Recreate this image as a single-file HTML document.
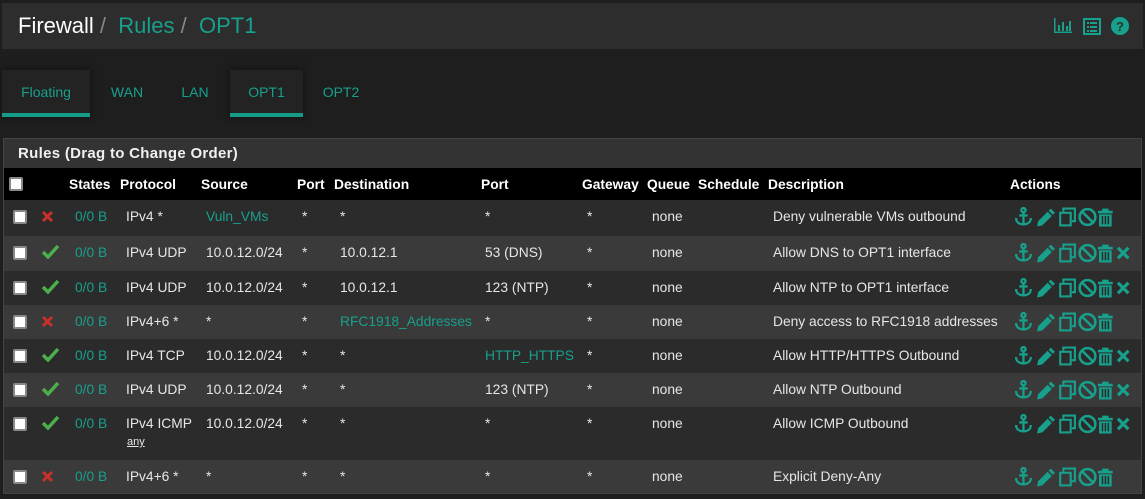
<!DOCTYPE html>
<html><head><meta charset="utf-8"><style>
*{margin:0;padding:0;box-sizing:border-box}
body{width:1145px;height:499px;background:#1e1e1e;font-family:"Liberation Sans",sans-serif;color:#e6e6e6;position:relative;overflow:hidden;font-size:13.8px}
.hdr{position:absolute;left:2px;top:3px;width:1141px;height:46px;background:#2d2d2d}
.hdr .t{position:absolute;left:16px;top:10px;font-size:22px;color:#fff}
.hdr .t span.s{color:#888}
.tl{color:#17a08c}
.tab{position:absolute;top:70px;height:47px;line-height:44px;font-size:14px;color:#17a08c;text-align:center}
.tab.a{background:#232323;box-shadow:0 0 6px #111;border-bottom:4px solid #149c89}
.panel{position:absolute;left:3px;top:138px;width:1139px;height:356px;border:1px solid #444;background:#2b2b2b}
.ph{position:absolute;left:0;top:0;width:100%;height:29px;background:#333;font-weight:bold;font-size:15px;padding:6px 14px;color:#f0f0f0;letter-spacing:.3px}
.th{position:absolute;left:0;top:29px;width:100%;height:32px;background:#000;font-weight:bold;color:#fff}
.row{position:absolute;left:0;width:100%}
.d{background:#2b2b2b}.l{background:#3a3a3a}
.c{position:absolute;white-space:nowrap}
.cb{position:absolute;width:14px;height:14px;background:#fff;border:2px solid #888;border-radius:2px}
.ic{position:absolute}
</style></head><body>
<div class="hdr"><div class="t">Firewall <span class="s">/</span>&nbsp; <span class="tl">Rules</span> <span class="s">/</span>&nbsp; <span class="tl">OPT1</span></div>
<svg style="position:absolute;left:1052px;top:15px" width="18" height="15" viewBox="0 0 18 15"><g fill="#17a08c"><rect x="0" y="0" width="1.5" height="15"/><rect x="0" y="13.5" width="18" height="1.5"/><rect x="4" y="7" width="2" height="6"/><rect x="8" y="4" width="2" height="9"/><rect x="12" y="8" width="2" height="5"/><rect x="15" y="3" width="2" height="10"/></g></svg>
<svg style="position:absolute;left:1081px;top:15px" width="18" height="17" viewBox="0 0 18 17"><rect x="1" y="1" width="16" height="15" fill="none" stroke="#17a08c" stroke-width="2"/><g fill="#17a08c"><rect x="4" y="4" width="2" height="2"/><rect x="7" y="4" width="7" height="2"/><rect x="4" y="8" width="2" height="2"/><rect x="7" y="8" width="7" height="2"/><rect x="4" y="12" width="2" height="2"/><rect x="7" y="12" width="7" height="2"/></g></svg>
<svg style="position:absolute;left:1109px;top:14px" width="18" height="18" viewBox="0 0 18 18"><circle cx="9" cy="9" r="9" fill="#17a08c"/><text x="9" y="14" font-size="13" font-weight="bold" fill="#2d2d2d" text-anchor="middle" font-family="Liberation Sans">?</text></svg>
</div>
<div class="tab a" style="left:2px;width:88px">Floating</div>
<div class="tab" style="left:97px;width:60px">WAN</div>
<div class="tab" style="left:165px;width:60px">LAN</div>
<div class="tab a" style="left:230px;width:73px">OPT1</div>
<div class="tab" style="left:310px;width:62px">OPT2</div>
<div class="panel">
<div class="ph">Rules (Drag to Change Order)</div>
<div class="th">
<div class="cb" style="left:5px;top:9px"></div>
<div class="c" style="left:65px;top:9px">States</div><div class="c" style="left:116px;top:9px">Protocol</div><div class="c" style="left:197px;top:9px">Source</div><div class="c" style="left:293px;top:9px">Port</div><div class="c" style="left:330px;top:9px">Destination</div><div class="c" style="left:477px;top:9px">Port</div><div class="c" style="left:578px;top:9px">Gateway</div><div class="c" style="left:643px;top:9px">Queue</div><div class="c" style="left:694px;top:9px">Schedule</div><div class="c" style="left:764px;top:9px">Description</div><div class="c" style="left:1006px;top:9px">Actions</div>
</div>
<div id="rows"></div>
</div>
<script>
var rows=[
[61,36,'d','x','IPv4 *','<span class="tl">Vuln_VMs</span>','*','*','*','*','Deny vulnerable VMs outbound',0],
[97,35,'l','v','IPv4 UDP','10.0.12.0/24','*','10.0.12.1','53 (DNS)','*','Allow DNS to OPT1 interface',1],
[132,34,'d','v','IPv4 UDP','10.0.12.0/24','*','10.0.12.1','123 (NTP)','*','Allow NTP to OPT1 interface',1],
[166,34,'l','x','IPv4+6 *','*','*','<span class="tl">RFC1918_Addresses</span>','*','*','Deny access to RFC1918 addresses',0],
[200,34,'d','v','IPv4 TCP','10.0.12.0/24','*','*','<span class="tl">HTTP_HTTPS</span>','*','Allow HTTP/HTTPS Outbound',1],
[234,34,'l','v','IPv4 UDP','10.0.12.0/24','*','*','123 (NTP)','*','Allow NTP Outbound',1],
[268,53,'d','v','IPv4 ICMP<br><span style="font-size:11px;text-decoration:underline;margin-left:1px;line-height:22px">any</span>','10.0.12.0/24','*','*','*','*','Allow ICMP Outbound',1],
[321,33,'l','x','IPv4+6 *','*','*','*','*','*','Explicit Deny-Any',0]];
var T='#17a08c';
function acts(x){var s='<svg class="ic" style="left:1010px;top:6px" width="126" height="22" viewBox="0 0 120 20"><g fill="'+T+'" stroke="'+T+'">'+
'<g fill="none" stroke-width="2.2"><circle cx="9" cy="3.5" r="2"/><path d="M9 5.5V17M5 8.5h8M2 11c0 4 3 6 7 6s7-2 7-6"/></g>'+
'<path stroke="none" d="M22 19l1-5 9-9 4 4-9 9zM33 4l2-2 4 4-2 2z"/>'+
'<g fill="none" stroke-width="2"><rect x="44" y="6" width="10" height="12"/><path d="M47 5V2h11v12h-3"/></g>'+
'<g fill="none" stroke-width="2.4"><circle cx="70" cy="10" r="7.5"/><path d="M65 5l10 10"/></g>'+
'<path stroke="none" d="M80 4h14v2.5H80zM84 2h6v2h-6zM81 7.5h12V19H81z"/><g fill="#2b2b2b" stroke="none"><rect x="83.5" y="9" width="1.5" height="8"/><rect x="86.3" y="9" width="1.5" height="8"/><rect x="89.1" y="9" width="1.5" height="8"/></g>';
if(x)s+='<path fill="none" stroke-width="3" d="M99 5l10 10M109 5L99 15"/>';
return s+'</g></svg>';}
var h='';
rows.forEach(function(r){var t=9;
h+='<div class="row '+r[2]+'" style="top:'+r[0]+'px;height:'+r[1]+'px">';
h+='<div class="cb" style="left:9px;top:10px"></div>';
h+=r[3]=='x'?'<svg class="ic" style="left:37px;top:10px" width="13" height="13"><path d="M2 2l9 9M11 2l-9 9" stroke="#c8302c" stroke-width="3"/></svg>':'<svg class="ic" style="left:37px;top:8px" width="19" height="15"><path d="M2 8l5 5L17 2" fill="none" stroke="#4cae4c" stroke-width="3.5"/></svg>';
h+='<div class="c tl" style="left:71px;top:'+t+'px">0/0 B</div><div class="c" style="left:122px;top:'+t+'px;line-height:15px">'+r[4]+'</div><div class="c" style="left:202px;top:'+t+'px">'+r[5]+'</div><div class="c" style="left:298px;top:'+t+'px">'+r[6]+'</div><div class="c" style="left:336px;top:'+t+'px">'+r[7]+'</div><div class="c" style="left:481px;top:'+t+'px">'+r[8]+'</div><div class="c" style="left:583px;top:'+t+'px">'+r[9]+'</div><div class="c" style="left:648px;top:'+t+'px">none</div><div class="c" style="left:769px;top:'+t+'px">'+r[10]+'</div>';
h+=acts(r[11])+'</div>';});
document.getElementById('rows').innerHTML=h;
</script>
</body></html>
